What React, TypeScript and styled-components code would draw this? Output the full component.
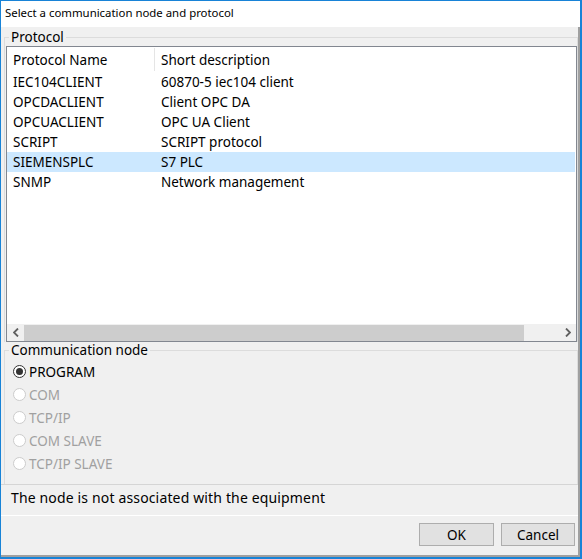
import React from 'react';
import styled, { createGlobalStyle } from 'styled-components';

const GlobalStyle = createGlobalStyle`
  html, body { margin: 0; padding: 0; background: #fff; }
  body { font-family: "Noto Sans", "Open Sans", sans-serif; color: #000; }
  * { box-sizing: border-box; }
`;

const Window = styled.div`
  width: 582px;
  height: 559px;
  border: 1px solid #1883d7;
  border-width: 1px 2px 2px 1px;
  display: flex;
  flex-direction: column;
  background: #fff;
`;

const TitleBar = styled.div`
  height: 26px;
  padding: 0 0 3px 4px;
  display: flex;
  align-items: center;
  font-size: 11.4px;
`;

const Body = styled.div`
  flex: 1;
  display: flex;
  flex-direction: column;
  background: #f0f0f0;
  border-right: 2px solid #a0a0a0;
  border-bottom: 2px solid #a0a0a0;
  padding: 2px 0 0 3px;
`;

const Group = styled.fieldset`
  margin: 0;
  padding: 1px 0 0 1px;
  border: 1px solid #dcdcdc;
  border-bottom: none;
  min-width: 0;
`;

const Legend = styled.legend`
  font-size: 13.5px;
  line-height: 16px;
  padding: 0 2px;
  margin-left: 3px;
`;

const List = styled.div`
  height: 296px;
  border: 1px solid #828790;
  background: #fff;
  display: flex;
  flex-direction: column;
  font-size: 13.5px;
`;

const HeaderRow = styled.div`
  height: 25px;
  display: grid;
  grid-template-columns: 148px 1fr;
  align-items: center;
`;

const HeaderCell = styled.div<{ $divider?: boolean }>`
  height: 23px;
  display: flex;
  align-items: center;
  padding-left: 6px;
  border-right: ${(p) => (p.$divider ? '1px solid #e5e5e5' : 'none')};
`;

const Row = styled.div<{ $selected?: boolean }>`
  height: 20px;
  display: grid;
  grid-template-columns: 148px 1fr;
  align-items: center;
  background: ${(p) => (p.$selected ? '#cce8ff' : 'transparent')};
  margin-right: 1px;
`;

const Cell = styled.div`
  padding-left: 6px;
  white-space: nowrap;
`;

const Filler = styled.div`
  flex: 1;
`;

const HScroll = styled.div`
  height: 17px;
  display: flex;
  align-items: center;
  background: #f0f0f0;
`;

const ScrollArrow = styled.div`
  width: 17px;
  height: 17px;
  display: flex;
  align-items: center;
  justify-content: center;
  color: #606060;
`;

const Track = styled.div`
  flex: 1;
  height: 17px;
  display: flex;
  align-items: center;
`;

const Thumb = styled.div`
  height: 16px;
  background: #cdcdcd;
`;

const RadioList = styled.div`
  display: flex;
  flex-direction: column;
  padding: 1px 0 9px 7px;
`;

const RadioRow = styled.label<{ $disabled?: boolean }>`
  height: 23px;
  display: flex;
  align-items: center;
  gap: 3px;
  font-size: 13.5px;
  color: ${(p) => (p.$disabled ? '#a0a0a0' : '#000')};
`;

const RadioCircle = styled.span<{ $checked?: boolean; $disabled?: boolean }>`
  width: 13px;
  height: 13px;
  border-radius: 50%;
  border: 1px solid ${(p) => (p.$disabled ? '#cccccc' : '#333333')};
  background: #fff;
  display: flex;
  align-items: center;
  justify-content: center;
  &::after {
    content: '';
    display: ${(p) => (p.$checked ? 'block' : 'none')};
    width: 7px;
    height: 7px;
    border-radius: 50%;
    background: #333333;
  }
`;

const Status = styled.div`
  height: 32px;
  padding: 4px 0 0 10px;
  font-size: 14px;
  line-height: 17px;
  letter-spacing: 0.15px;
  border-top: 1px solid #d5d5d5;
  border-bottom: 1px solid #ffffff;
  margin-left: -3px;
`;

const ButtonBar = styled.div`
  flex: 1;
  display: flex;
  justify-content: flex-end;
  align-items: flex-start;
  gap: 7px;
  padding: 7px 3px 0 0;
`;

const Button = styled.button<{ $width: number }>`
  width: ${(p) => p.$width}px;
  height: 23px;
  border: 1px solid #adadad;
  background: #e1e1e1;
  font-family: inherit;
  font-size: 13.5px;
  color: #000;
  padding: 0;
`;

const protocols = [
  { name: 'IEC104CLIENT', desc: '60870-5 iec104 client' },
  { name: 'OPCDACLIENT', desc: 'Client OPC DA' },
  { name: 'OPCUACLIENT', desc: 'OPC UA Client' },
  { name: 'SCRIPT', desc: 'SCRIPT protocol' },
  { name: 'SIEMENSPLC', desc: 'S7 PLC' },
  { name: 'SNMP', desc: 'Network management' },
];

const nodes = [
  { label: 'PROGRAM', checked: true, disabled: false },
  { label: 'COM', checked: false, disabled: true },
  { label: 'TCP/IP', checked: false, disabled: true },
  { label: 'COM SLAVE', checked: false, disabled: true },
  { label: 'TCP/IP SLAVE', checked: false, disabled: true },
];

const Chevron: React.FC<{ dir: 'left' | 'right' }> = ({ dir }) => (
  <svg width="6" height="9" viewBox="0 0 6 9">
    <path
      d={dir === 'left' ? 'M5 0.5 L1 4.5 L5 8.5' : 'M1 0.5 L5 4.5 L1 8.5'}
      fill="none"
      stroke="currentColor"
      strokeWidth="1.8"
    />
  </svg>
);

const App: React.FC = () => {
  return (
    <>
      <GlobalStyle />
      <Window>
        <TitleBar>Select a communication node and protocol</TitleBar>
        <Body>
          <Group>
            <Legend>Protocol</Legend>
            <List>
              <HeaderRow>
                <HeaderCell $divider>Protocol Name</HeaderCell>
                <HeaderCell>Short description</HeaderCell>
              </HeaderRow>
              {protocols.map((p) => (
                <Row key={p.name} $selected={p.name === 'SIEMENSPLC'}>
                  <Cell>{p.name}</Cell>
                  <Cell>{p.desc}</Cell>
                </Row>
              ))}
              <Filler />
              <HScroll>
                <ScrollArrow><Chevron dir="left" /></ScrollArrow>
                <Track>
                  <Thumb style={{ width: '93.5%' }} />
                </Track>
                <ScrollArrow><Chevron dir="right" /></ScrollArrow>
              </HScroll>
            </List>
          </Group>
          <Group>
            <Legend>Communication node</Legend>
            <RadioList>
              {nodes.map((n) => (
                <RadioRow key={n.label} $disabled={n.disabled}>
                  <RadioCircle $checked={n.checked} $disabled={n.disabled} />
                  {n.label}
                </RadioRow>
              ))}
            </RadioList>
          </Group>
          <Status>The node is not associated with the equipment</Status>
          <ButtonBar>
            <Button $width={75}>OK</Button>
            <Button $width={74}>Cancel</Button>
          </ButtonBar>
        </Body>
      </Window>
    </>
  );
};

export default App;
